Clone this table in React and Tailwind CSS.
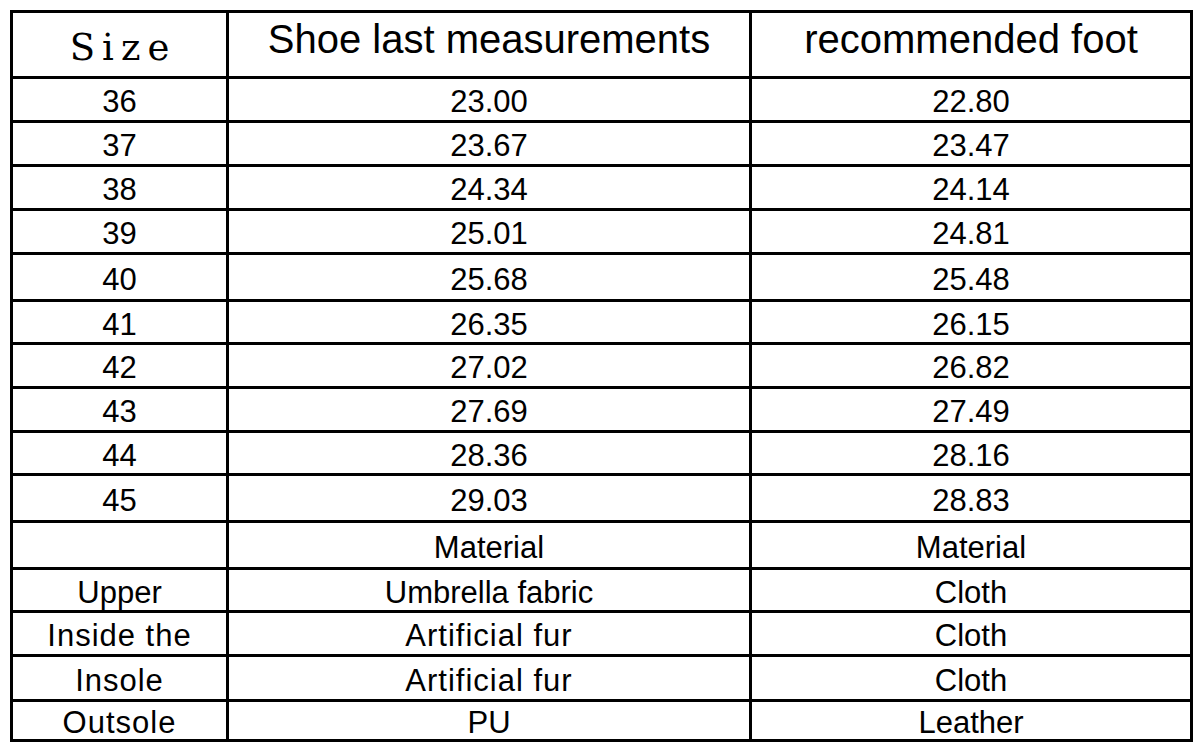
import React from "react";

const rows = [
  ["36", "23.00", "22.80", "h-[41px]"],
  ["37", "23.67", "23.47", "h-[41px]"],
  ["38", "24.34", "24.14", "h-[41px]"],
  ["39", "25.01", "24.81", "h-[41px]"],
  ["40", "25.68", "25.48", "h-[44px]"],
  ["41", "26.35", "26.15", "h-[40px]"],
  ["42", "27.02", "26.82", "h-[41px]"],
  ["43", "27.69", "27.49", "h-[41px]"],
  ["44", "28.36", "28.16", "h-[40px]"],
  ["45", "29.03", "28.83", "h-[44px]"],
  ["", "Material", "Material", "h-[44px]"],
  ["Upper", "Umbrella fabric", "Cloth", "h-[40px]"],
  ["Inside the", "Artificial fur", "Cloth", "h-[41px]"],
  ["Insole", "Artificial fur", "Cloth", "h-[42px]"],
  ["Outsole", "PU", "Leather", "h-[37px]"],
];

const spaced = ["Inside the", "Insole", "Outsole", "Artificial fur"];

function Cell({ text, h }) {
  return (
    <div
      className={`${h} bg-white flex items-center justify-center pt-[6px] text-[31px] text-black ${
        spaced.includes(text) ? "tracking-[1px]" : ""
      }`}
    >
      {text}
    </div>
  );
}

export default function App() {
  return (
    <div className="w-[1200px] h-[748px] bg-white overflow-hidden pt-[10px] pl-[10px] font-['Liberation_Sans',Arial,sans-serif]">
      <div className="inline-grid grid-cols-[213px_520px_438px] gap-[3px] p-[3px] bg-black">
        <div className="h-[63px] bg-white flex items-center justify-center pt-[7px] text-[37px] tracking-[7px] pl-[7px] font-['DejaVu_Serif','Liberation_Serif',serif] text-black">
          Size
        </div>
        <div className="h-[63px] bg-white flex items-center justify-center pb-[12px] text-[40px] text-black">
          Shoe last measurements
        </div>
        <div className="h-[63px] bg-white flex items-center justify-center pb-[12px] text-[40px] text-black">
          recommended foot
        </div>
        {rows.map(([a, b, c, h], i) => (
          <React.Fragment key={i}>
            <Cell text={a} h={h} />
            <Cell text={b} h={h} />
            <Cell text={c} h={h} />
          </React.Fragment>
        ))}
      </div>
    </div>
  );
}
